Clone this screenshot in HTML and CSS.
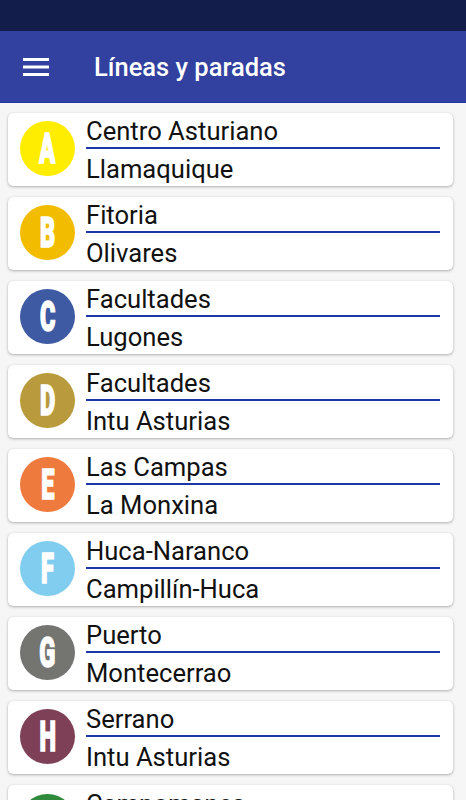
FILE: index.html
```html
<!DOCTYPE html>
<html lang="es">
<head>
    <meta charset="UTF-8">
    <meta name="viewport" content="width=device-width, initial-scale=1.0">
    <title>Líneas y paradas</title>
    <link rel="stylesheet" href="styles.css">
</head>
<body>
    <div class="status-bar"></div>

    <!-- Barra superior -->
    <header class="toolbar">
        <svg class="menu-icon" width="26" height="20" viewBox="0 0 26 20">
            <rect x="0" y="1" width="26" height="3" fill="#fff"/>
            <rect x="0" y="8.5" width="26" height="3" fill="#fff"/>
            <rect x="0" y="16" width="26" height="3" fill="#fff"/>
        </svg>
        <h1 class="title">Líneas y paradas</h1>
    </header>

    <!-- Lista de líneas -->
    <main class="lines">
        <div class="card">
            <div class="badge badge-a"><span>A</span></div>
            <div class="stops">
                <p class="stop">Centro Asturiano</p>
                <div class="divider"></div>
                <p class="stop">Llamaquique</p>
            </div>
        </div>
        <div class="card">
            <div class="badge badge-b"><span>B</span></div>
            <div class="stops">
                <p class="stop">Fitoria</p>
                <div class="divider"></div>
                <p class="stop">Olivares</p>
            </div>
        </div>
        <div class="card">
            <div class="badge badge-c"><span>C</span></div>
            <div class="stops">
                <p class="stop">Facultades</p>
                <div class="divider"></div>
                <p class="stop">Lugones</p>
            </div>
        </div>
        <div class="card">
            <div class="badge badge-d"><span>D</span></div>
            <div class="stops">
                <p class="stop">Facultades</p>
                <div class="divider"></div>
                <p class="stop">Intu Asturias</p>
            </div>
        </div>
        <div class="card">
            <div class="badge badge-e"><span>E</span></div>
            <div class="stops">
                <p class="stop">Las Campas</p>
                <div class="divider"></div>
                <p class="stop">La Monxina</p>
            </div>
        </div>
        <div class="card">
            <div class="badge badge-f"><span>F</span></div>
            <div class="stops">
                <p class="stop">Huca-Naranco</p>
                <div class="divider"></div>
                <p class="stop">Campillín-Huca</p>
            </div>
        </div>
        <div class="card">
            <div class="badge badge-g"><span>G</span></div>
            <div class="stops">
                <p class="stop">Puerto</p>
                <div class="divider"></div>
                <p class="stop">Montecerrao</p>
            </div>
        </div>
        <div class="card">
            <div class="badge badge-h"><span>H</span></div>
            <div class="stops">
                <p class="stop">Serrano</p>
                <div class="divider"></div>
                <p class="stop">Intu Asturias</p>
            </div>
        </div>
        <div class="card">
            <div class="badge badge-i"><span>I</span></div>
            <div class="stops">
                <p class="stop">Campomanes</p>
                <div class="divider"></div>
                <p class="stop">Ventanielles</p>
            </div>
        </div>
    </main>
</body>
</html>
```

FILE: styles.css
```css
/* Estilos generales */
html, body {
    overflow: hidden;
}

body {
    margin: 0;
    padding: 0;
    font-family: Roboto, "Noto Sans", sans-serif;
    background-color: #f6f6f6;
    color: #111;
}

.status-bar {
    height: 31px;
    background-color: #121d4b;
}

.toolbar {
    height: 71px;
    display: flex;
    align-items: center;
    background-color: #3240a0;
    border-bottom: 1px solid #2234a6;
}

.menu-icon {
    margin-left: 23px;
    margin-top: 1px;
}

.title {
    margin: 0 0 0 45px;
    color: #fff;
    font-size: 25.5px;
    font-weight: 500;
}

/* Lista */
.lines {
    display: flex;
    flex-direction: column;
    gap: 11px;
    padding-top: 10px;
}

.card {
    display: flex;
    height: 73px;
    box-sizing: border-box;
    margin: 0 13px 0 8px;
    padding: 3px 13px 2px 12px;
    background: #fff;
    border-radius: 5px;
    box-shadow: 0 1px 3px rgba(0, 0, 0, 0.28), 0 0 1px rgba(0, 0, 0, 0.15);
}

.card:last-child {
    padding-top: 4px;
}

.badge {
    flex: none;
    width: 55px;
    height: 55px;
    margin-top: 5px;
    border-radius: 50%;
    display: flex;
    align-items: center;
    justify-content: center;
    overflow: hidden;
}

.badge span {
    color: #fff;
    font-family: Roboto, sans-serif;
    font-weight: 900;
    font-size: 42px;
    line-height: 1;
    -webkit-text-stroke: 1.6px #fff;
    transform: scaleX(0.56);
    margin-top: 1px;
}

.badge-a { background: #ffed00; }
.badge-b { background: #f2bd00; }
.badge-c { background: #3d5aa3; }
.badge-d { background: #b99b3d; }
.badge-e { background: #ee7a3e; }
.badge-f { background: #80cdf0; }
.badge-g { background: #747471; }
.badge-h { background: #7e4056; }
.badge-i { background: #2f8a3b; }

.stops {
    flex: 1;
    margin-left: 11px;
    display: flex;
    flex-direction: column;
}

.stop {
    margin: 0;
    font-size: 25.6px;
    line-height: 30px;
    white-space: nowrap;
}

.divider {
    height: 2px;
    margin: 1px 0 5px;
    background-color: #1d36aa;
}
```
